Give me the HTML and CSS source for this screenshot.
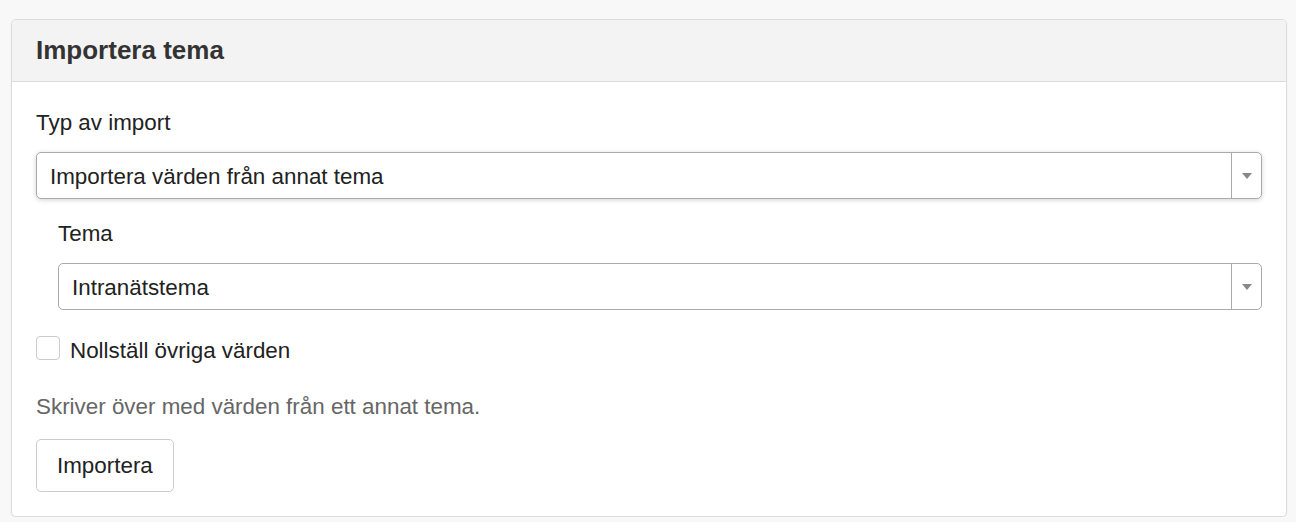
FILE: index.html
```html
<!DOCTYPE html>
<html lang="sv">
<head>
    <meta charset="UTF-8">
    <title>Importera tema</title>
    <link rel="stylesheet" href="styles.css">
</head>
<body>
    <div class="panel">
        <div class="panel-header">
            <h2>Importera tema</h2>
        </div>
        <div class="panel-body">
            <label class="field-label">Typ av import</label>
            <div class="select select-active">
                <span class="select-value">Importera värden från annat tema</span>
                <span class="select-arrow"><svg width="10" height="6" viewBox="0 0 10 6"><path d="M0 0h10L5 6z" fill="#888"/></svg></span>
            </div>

            <div class="sub-field">
                <label class="field-label">Tema</label>
                <div class="select">
                    <span class="select-value">Intranätstema</span>
                    <span class="select-arrow"><svg width="10" height="6" viewBox="0 0 10 6"><path d="M0 0h10L5 6z" fill="#888"/></svg></span>
                </div>
            </div>

            <label class="checkbox">
                <span class="checkbox-box"></span>
                <span class="checkbox-text">Nollställ övriga värden</span>
            </label>

            <p class="help-text">Skriver över med värden från ett annat tema.</p>

            <button class="btn">Importera</button>
        </div>
    </div>
</body>
</html>
```

FILE: styles.css
```css
* {
    margin: 0;
    padding: 0;
    box-sizing: border-box;
}

body {
    font-family: "Liberation Sans", Arial, sans-serif;
    background-color: #f8f8f8;
    color: #222;
    padding: 19px 9px 0 11px;
}

.panel {
    background-color: #fff;
    border: 1px solid #dcdcdc;
    border-radius: 5px;
    box-shadow: 0 1px 2px rgba(0,0,0,0.05);
    overflow: hidden;
}

.panel-header {
    background-color: #f3f3f3;
    border-bottom: 1px solid #dcdcdc;
    height: 62px;
    display: flex;
    align-items: center;
    padding: 0 24px;
}

.panel-header h2 {
    font-size: 26px;
    font-weight: bold;
    color: #333;
}

.panel-body {
    padding: 29px 24px 24px 24px;
    font-size: 22.4px;
    line-height: 24px;
}

.field-label {
    display: block;
    margin-bottom: 17px;
}

.select {
    display: flex;
    align-items: stretch;
    height: 47px;
    border: 1px solid #aaa;
    border-radius: 5px;
    background-color: #fff;
}

.select-active {
    box-shadow: 0 1px 5px rgba(0,0,0,0.18);
}

.select-value {
    flex: 1;
    display: flex;
    align-items: center;
    padding: 3px 13px 0 13px;
    border-right: 1px solid #aaa;
}

.select-arrow {
    width: 29px;
    display: flex;
    align-items: center;
    justify-content: center;
}

.sub-field {
    padding: 23px 0 0 22px;
}

.checkbox {
    display: flex;
    align-items: flex-start;
    margin-top: 26px;
}

.checkbox-box {
    width: 24px;
    height: 24px;
    border: 1px solid #ccc;
    border-radius: 4px;
    margin-right: 10px;
}

.checkbox-text {
    padding-top: 3px;
}

.help-text {
    margin-top: 32px;
    color: #666;
}

.btn {
    margin-top: 20px;
    height: 53px;
    padding: 0 20px;
    font-family: inherit;
    font-size: 22.4px;
    color: #222;
    background-color: #fff;
    border: 1px solid #ccc;
    border-radius: 5px;
}
```
